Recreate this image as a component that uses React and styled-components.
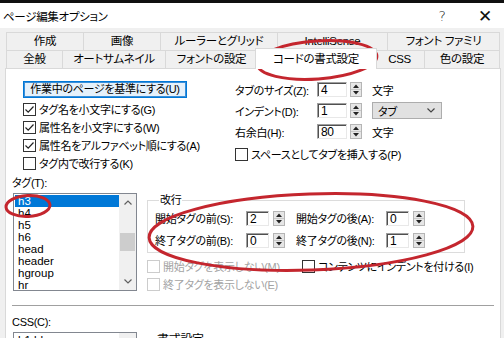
import React from "react";
import styled, { createGlobalStyle } from "styled-components";

const Global = createGlobalStyle`
  html, body { margin: 0; padding: 0; }
  body {
    width: 504px; height: 338px; overflow: hidden; background: #f0f0f0;
    font-family: "Liberation Sans", "Noto Sans CJK JP", sans-serif;
    font-size: 11px; letter-spacing: -0.3px; color: #000;
    font-feature-settings: "palt";
  }
  #root { width: 504px; height: 338px; }
`;

const Window = styled.div`
  position: relative;
  width: 504px; height: 338px; overflow: hidden;
  box-sizing: border-box;
  border-top: 3px solid #101010;
  display: flex; flex-direction: column;
  background: #f0f0f0;
`;

const TitleBar = styled.div`
  height: 25px; flex: none;
  background: #fff;
  display: flex; align-items: center;
  padding-left: 3px;
  font-size: 11.5px;
`;

const TitleText = styled.span`
  flex: 1;
`;

const TitleButton = styled.span`
  width: ${p => p.$w}px;
  text-align: center;
  font-size: ${p => p.$size}px;
  color: #111;
  font-family: "DejaVu Sans", sans-serif;
  font-weight: 300;
`;

const TabArea = styled.div`
  padding: 4px 4px 0 6px;
  flex: none;
`;

const TabRow = styled.div`
  display: flex;
  height: 18px;
`;

const Tab = styled.div`
  position: relative;
  box-sizing: border-box;
  width: ${p => p.$w}px;
  height: 18px;
  margin-left: -1px;
  &:first-child { margin-left: 0; }
  border: 1px solid #d9d9d9;
  border-bottom: none;
  background: #f0f0f0;
  text-align: center;
  line-height: 17px;
  white-space: nowrap;
  font-size: 11.5px;
`;

const ActiveTab = styled(Tab)`
  width: ${p => p.$w + 4}px;
  height: 21px;
  margin: -2px -2px -1px -3px;
  background: #fff;
  z-index: 2;
  line-height: 20px;
`;

const Page = styled.div`
  flex: 1;
  margin: 0 3px 0 5px;
  border: 1px solid #d9d9d9;
  border-bottom: none;
  background: #fff;
  display: flex; flex-direction: column;
`;

const TopSection = styled.div`
  display: flex;
  height: 106px;
  flex: none;
`;

const LeftCol = styled.div`
  width: 212px;
  margin-left: 17px;
  padding-top: 12px;
`;

const PushButton = styled.div`
  box-sizing: border-box;
  width: 164px; height: 17px;
  border: 1px solid #0078d7;
  box-shadow: inset 0 0 0 1px #3a8fd9;
  background: #e5f1fb;
  text-align: center;
  line-height: 15px;
  white-space: nowrap;
`;

const CheckList = styled.div`
  margin-top: 2px;
  display: flex; flex-direction: column;
`;

const CheckRow = styled.label`
  display: flex; align-items: center;
  height: ${p => p.$h || 18}px;
  gap: 3px;
  white-space: nowrap;
  color: ${p => (p.$disabled ? "#a3a3a3" : "#000")};
  width: ${p => (p.$w ? `${p.$w}px` : "auto")};
  flex: none;
`;

const Box = styled.span`
  box-sizing: border-box;
  width: 13px; height: 13px; flex: none;
  border: 1px solid ${p => (p.$disabled ? "#cccccc" : "#333333")};
  background: #fff;
  display: flex; align-items: center; justify-content: center;
`;

const RightCol = styled.div`
  padding-top: 10px;
  display: flex; flex-direction: column;
`;

const SpinRow = styled.div`
  display: flex; align-items: center;
  height: 21px;
`;

const FieldLabel = styled.span`
  width: ${p => p.$w}px;
  margin-left: ${p => p.$ml || 0}px;
  flex: none;
  white-space: nowrap;
`;

const Input = styled.div`
  box-sizing: border-box;
  width: ${p => p.$w}px; height: 15px;
  flex: none;
  border: 1px solid;
  border-color: #a0a0a0 #e8e8e8 #e8e8e8 #a0a0a0;
  box-shadow: inset 1px 1px 0 #505050;
  background: #fff;
  padding-left: 3px;
  line-height: 14px;
  font-size: 12px;
`;

const Spin = styled.div`
  box-sizing: border-box;
  margin-left: ${p => p.$ml || 3}px;
  width: 12px; height: 15px;
  flex: none;
  display: flex; flex-direction: column;
  border: 1px solid #b5b5b5;
  background: #e6e6e6;
`;

const SpinHalf = styled.div`
  flex: 1;
  display: flex; align-items: center; justify-content: center;
  border-top: ${p => (p.$bottom ? "1px solid #c8c8c8" : "none")};
`;

const Unit = styled.span`
  margin-left: 10px;
`;

const Dropdown = styled.div`
  box-sizing: border-box;
  margin-left: 10px;
  width: 70px; height: 17px;
  border: 1px solid #adadad;
  background: #e1e1e1;
  display: flex; align-items: center; justify-content: space-between;
  padding: 0 6px 0 5px;
`;

const MiddleSection = styled.div`
  display: flex;
  padding-left: 6px;
  flex: none;
`;

const ListCol = styled.div`
  width: 125px;
  display: flex; flex-direction: column;
`;

const SmallLabel = styled.div`
  height: 16px; line-height: 16px;
`;

const ListBox = styled.div`
  box-sizing: border-box;
  margin: 2px 0 0 1px;
  width: 124px; height: ${p => p.$h}px;
  border: 1px solid #828790;
  background: #fff;
  display: flex;
  overflow: hidden;
`;

const ListItems = styled.div`
  flex: 1;
  padding-top: 1px;
  display: flex; flex-direction: column;
`;

const ListItem = styled.div`
  height: 12px; line-height: 12px;
  padding-left: 3px;
  margin-left: 1px;
  font-size: 11.5px;
  letter-spacing: 0;
  color: ${p => (p.$sel ? "#fff" : "#000")};
  background: ${p => (p.$sel ? "#0078d7" : "transparent")};
`;

const ScrollBar = styled.div`
  width: 17px; flex: none;
  background: #f0f0f0;
  display: flex; flex-direction: column;
`;

const ScrollArrow = styled.div`
  height: 17px; flex: none;
  display: flex; align-items: center; justify-content: center;
`;

const ScrollTrack = styled.div`
  flex: 1;
  display: flex; flex-direction: column;
  padding-top: ${p => p.$top}px;
`;

const Thumb = styled.div`
  margin: 0 1px;
  height: 18px;
  background: #cdcdcd;
`;

const GroupCol = styled.div`
  margin-left: 10px;
  padding-top: 18px;
  display: flex; flex-direction: column;
`;

const Group = styled.fieldset`
  box-sizing: border-box;
  margin: 0;
  width: 318px;
  border: 1px solid #dcdcdc;
  padding: 1px 0 2px 7px;
  display: flex; flex-direction: column; gap: 2px;
`;

const Legend = styled.legend`
  padding: 0 1px;
  margin-left: 4px;
  line-height: 14px;
`;

const GroupRow = styled.div`
  display: flex; align-items: center;
  height: 20px;
`;

const OptGrid = styled.div`
  margin-top: 4px;
  display: flex; flex-direction: column;
`;

const OptLine = styled.div`
  display: flex;
`;

const Separator = styled.div`
  margin: 12px 0 0 6px;
  width: 482px; height: 1px;
  background: #a0a0a0;
  flex: none;
`;

const BottomSection = styled.div`
  display: flex;
  padding: 8px 0 0 6px;
`;

const Heading = styled.div`
  margin-left: 20px;
  padding-top: 16px;
  font-size: 12px;
`;

const Overlay = styled.svg`
  position: absolute;
  left: 0; top: 0;
  pointer-events: none;
`;

const Check = ({ checked, disabled }) => (
  <Box $disabled={disabled}>
    {checked && (
      <svg width="11" height="11" viewBox="0 0 11 11">
        <path d="M1.5 5.5 L4.2 8.2 L9.5 2.5" fill="none" stroke="#222" strokeWidth="1.2" />
      </svg>
    )}
  </Box>
);

const SpinButtons = ({ ml }) => (
  <Spin $ml={ml}>
    <SpinHalf>
      <svg width="6" height="4" viewBox="0 0 6 4"><path d="M0 4 L3 0.5 L6 4 Z" fill="#222" /></svg>
    </SpinHalf>
    <SpinHalf $bottom>
      <svg width="6" height="4" viewBox="0 0 6 4"><path d="M0 0 L3 3.5 L6 0 Z" fill="#222" /></svg>
    </SpinHalf>
  </Spin>
);

const Chevron = ({ up, color = "#606060", w = 8, h = 5 }) => (
  <svg width={w} height={h} viewBox="0 0 8 5">
    <path d={up ? "M0.5 4.5 L4 1 L7.5 4.5" : "M0.5 0.5 L4 4 L7.5 0.5"} fill="none" stroke={color} strokeWidth="1.2" />
  </svg>
);

const row1 = [
  ["作成", 78], ["画像", 78], ["ルーラーとグリッド", 118], ["IntelliSense", 111], ["フォント ファミリ", 113],
];
const row2 = [
  ["全般", 57], ["オートサムネイル", 104], ["フォントの設定", 93], ["コードの書式設定", 118, true], ["CSS", 51], ["色の設定", 76],
];

const checks = [
  ["タグ名を小文字にする(G)", true],
  ["属性名を小文字にする(W)", true],
  ["属性名をアルファベット順にする(A)", true],
  ["タグ内で改行する(K)", false],
];

const tags = ["h3", "h4", "h5", "h6", "head", "header", "hgroup", "hr"];

export default function App() {
  return (
    <>
      <Global />
      <Window>
        <TitleBar>
          <TitleText>ページ編集オプション</TitleText>
          <TitleButton $w={48} $size={14}>?</TitleButton>
          <TitleButton $w={38} $size={17}>✕</TitleButton>
        </TitleBar>
        <TabArea>
          <TabRow>
            {row1.map(([t, w]) => <Tab key={t} $w={w}>{t}</Tab>)}
          </TabRow>
          <TabRow>
            {row2.map(([t, w, a]) =>
              a ? <ActiveTab key={t} $w={w}>{t}</ActiveTab> : <Tab key={t} $w={w}>{t}</Tab>
            )}
          </TabRow>
        </TabArea>
        <Page>
          <TopSection>
            <LeftCol>
              <PushButton>作業中のページを基準にする(U)</PushButton>
              <CheckList>
                {checks.map(([t, c]) => (
                  <CheckRow key={t}><Check checked={c} />{t}</CheckRow>
                ))}
              </CheckList>
            </LeftCol>
            <RightCol>
              <SpinRow>
                <FieldLabel $w={82}>タブのサイズ(Z):</FieldLabel>
                <Input $w={30}>4</Input>
                <SpinButtons />
                <Unit>文字</Unit>
              </SpinRow>
              <SpinRow>
                <FieldLabel $w={82}>インデント(D):</FieldLabel>
                <Input $w={30}>1</Input>
                <SpinButtons />
                <Dropdown>タブ<Chevron color="#444" /></Dropdown>
              </SpinRow>
              <SpinRow>
                <FieldLabel $w={82}>右余白(H):</FieldLabel>
                <Input $w={30}>80</Input>
                <SpinButtons />
                <Unit>文字</Unit>
              </SpinRow>
              <CheckRow $h={24}><Check />スペースとしてタブを挿入する(P)</CheckRow>
            </RightCol>
          </TopSection>
          <MiddleSection>
            <ListCol>
              <SmallLabel>タグ(T):</SmallLabel>
              <ListBox $h={98}>
                <ListItems>
                  {tags.map((t, i) => <ListItem key={t} $sel={i === 0}>{t}</ListItem>)}
                </ListItems>
                <ScrollBar>
                  <ScrollArrow><Chevron up /></ScrollArrow>
                  <ScrollTrack $top={22}><Thumb /></ScrollTrack>
                  <ScrollArrow><Chevron /></ScrollArrow>
                </ScrollBar>
              </ListBox>
            </ListCol>
            <GroupCol>
              <Group>
                <Legend>改行</Legend>
                <GroupRow>
                  <FieldLabel $w={91}>開始タグの前(S):</FieldLabel>
                  <Input $w={23}>2</Input>
                  <SpinButtons ml={4} />
                  <FieldLabel $w={90} $ml={11}>開始タグの後(A):</FieldLabel>
                  <Input $w={23}>0</Input>
                  <SpinButtons ml={4} />
                </GroupRow>
                <GroupRow>
                  <FieldLabel $w={91}>終了タグの前(B):</FieldLabel>
                  <Input $w={23}>0</Input>
                  <SpinButtons ml={4} />
                  <FieldLabel $w={90} $ml={11}>終了タグの後(N):</FieldLabel>
                  <Input $w={23}>1</Input>
                  <SpinButtons ml={4} />
                </GroupRow>
              </Group>
              <OptGrid>
                <OptLine>
                  <CheckRow $disabled $w={155}><Check disabled />開始タグを表示しない(M)</CheckRow>
                  <CheckRow><Check />コンテンツにインデントを付ける(I)</CheckRow>
                </OptLine>
                <OptLine>
                  <CheckRow $disabled><Check disabled />終了タグを表示しない(E)</CheckRow>
                </OptLine>
              </OptGrid>
            </GroupCol>
          </MiddleSection>
          <Separator />
          <BottomSection>
            <ListCol>
              <SmallLabel>CSS(C):</SmallLabel>
              <ListBox $h={40}>
                <ListItems>
                  <ListItem>h1 hh</ListItem>
                </ListItems>
                <ScrollBar>
                  <ScrollTrack $top={0} />
                </ScrollBar>
              </ListBox>
            </ListCol>
            <Heading>書式設定</Heading>
          </BottomSection>
        </Page>
        <Overlay width="504" height="338" viewBox="0 0 504 338">
          <g fill="none" stroke="#c4262e" strokeWidth="3">
            <ellipse cx="317" cy="57" rx="60" ry="19" transform="rotate(-4 317 57)" />
            <ellipse cx="28" cy="203" rx="22" ry="10.5" transform="rotate(-3 28 203)" />
            <ellipse cx="311" cy="229" rx="162" ry="38" transform="rotate(-2 311 229)" />
          </g>
        </Overlay>
      </Window>
    </>
  );
}
